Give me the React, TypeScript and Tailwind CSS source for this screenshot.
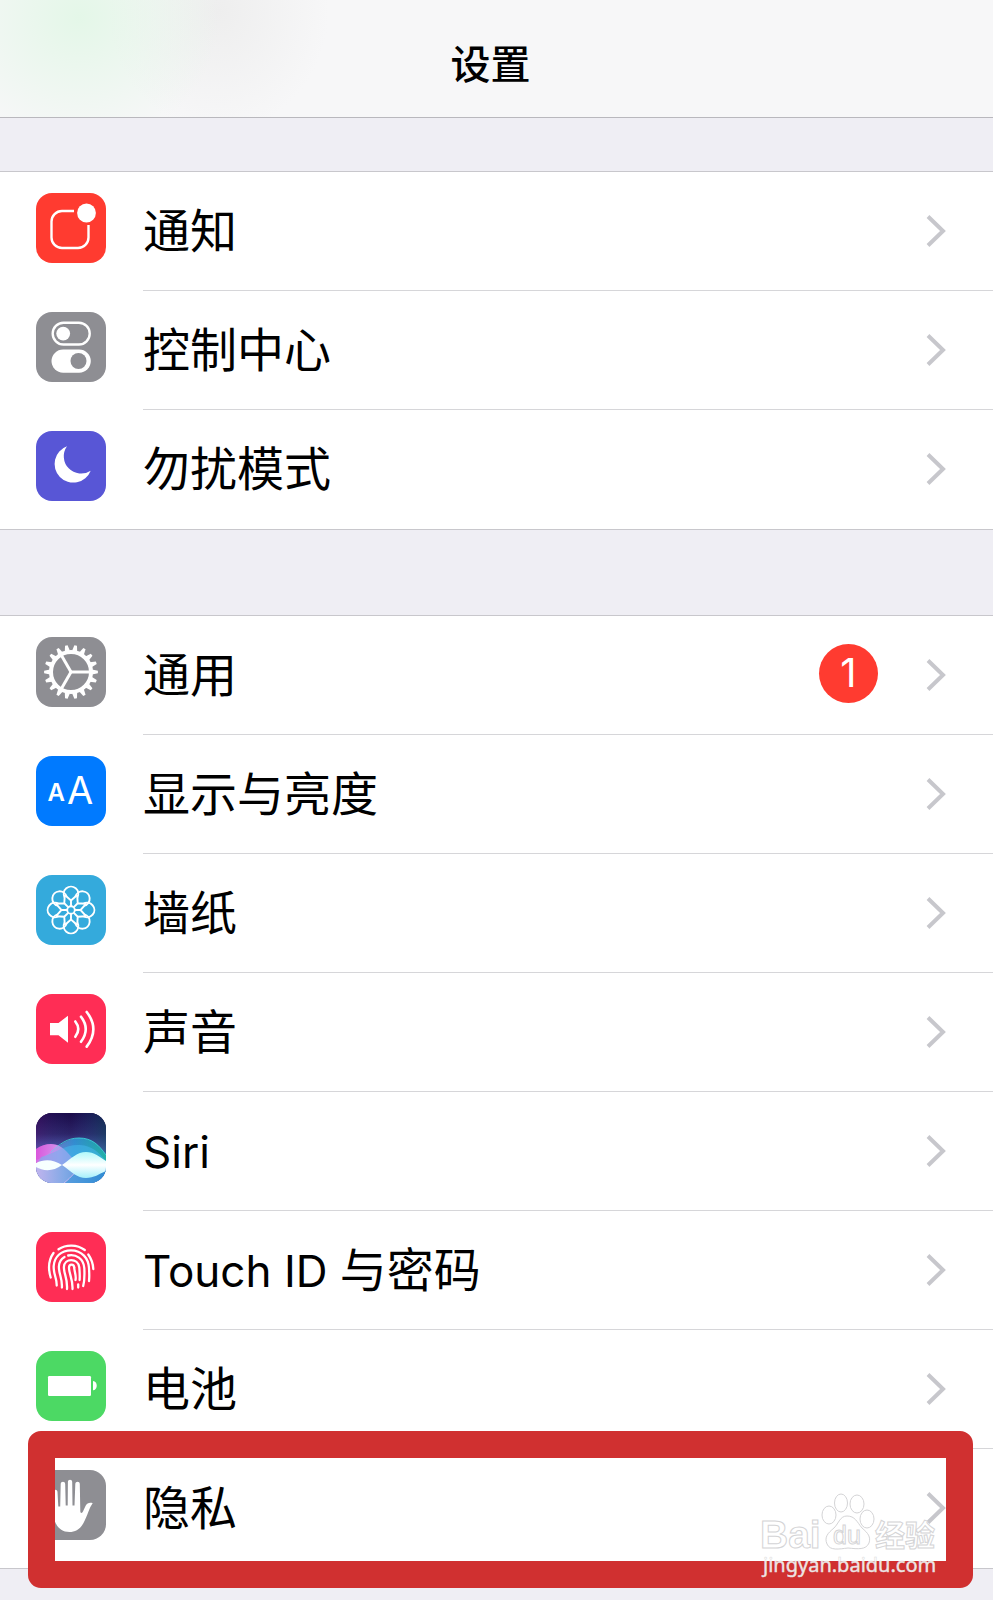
import React from 'react';

interface SettingItem {
  label: React.ReactNode;
  icon: React.ReactNode;
  tile: string;
  badge?: number;
  highlighted?: boolean;
}

const GEAR_TEETH = Array.from({ length: 18 }, (_, i) => i * 20);
const PETALS = Array.from({ length: 8 }, (_, i) => i * 45);

function Glyph({ children }: { children: React.ReactNode }) {
  return (
    <svg viewBox="0 0 70 70" className="block size-full" fill="none" aria-hidden="true">
      {children}
    </svg>
  );
}

function NotificationGlyph() {
  return (
    <Glyph>
      <path d="M38 18H26a10.5 10.5 0 0 0-10.5 10.5v16A10.5 10.5 0 0 0 26 55h16a10.5 10.5 0 0 0 10.5-10.5V32" stroke="#fff" strokeWidth="2.4" />
      <circle cx="50.5" cy="20" r="9.4" fill="#fff" />
    </Glyph>
  );
}

function ControlCenterGlyph() {
  return (
    <Glyph>
      <rect x="16.7" y="10.8" width="37" height="21.7" rx="10.8" stroke="#fff" strokeWidth="2.4" />
      <circle cx="27.2" cy="21.6" r="6.9" fill="#fff" />
      <rect x="15.5" y="37.5" width="39.3" height="23.2" rx="11.6" fill="#fff" />
      <circle cx="42.5" cy="49" r="8" fill="#8e8e93" />
    </Glyph>
  );
}

function MoonGlyph() {
  return (
    <Glyph>
      <path d="M31 15.3A18.7 18.7 0 1 0 54.7 39.7A17.3 17.3 0 0 1 31 15.3Z" fill="#fff" />
    </Glyph>
  );
}

function GearGlyph() {
  return (
    <Glyph>
      <g transform="translate(35 35)">
        <circle r="20" stroke="#fff" strokeWidth="4" />
        {GEAR_TEETH.map((angle) => (
          <path key={angle} d="M21-2.6L26.9-1.3V1.3L21 2.6Z" fill="#fff" transform={`rotate(${angle})`} />
        ))}
        {[0, 120, 240].map((angle) => (
          <path key={angle} d="M0 0H19" stroke="#fff" strokeWidth="3" transform={`rotate(${angle})`} />
        ))}
      </g>
    </Glyph>
  );
}

function TextSizeGlyph() {
  return (
    <Glyph>
      <text x="11.5" y="45" fill="#fff" fontSize="24" fontWeight="600" fontFamily="Inter, sans-serif">A</text>
      <text x="31" y="48" fill="#fff" fontSize="38" fontFamily="Inter, sans-serif">A</text>
    </Glyph>
  );
}

function FlowerGlyph() {
  return (
    <Glyph>
      <g transform="translate(35 35)" stroke="#fff" strokeWidth="1.9">
        <circle r="3.8" />
        {PETALS.map((angle) => (
          <g key={angle} transform={`rotate(${angle})`}>
            <path d="M-6.3-12.4A7.3 7.3 0 1 1 6.3-12.4" />
            <path d="M0-4V-9.5M-6.2-15L0-9.5L6.2-15" />
          </g>
        ))}
      </g>
    </Glyph>
  );
}

function SpeakerGlyph() {
  return (
    <Glyph>
      <path d="M14 29H22.5L32 21.7V48.8L22.5 41.3H14Z" fill="#fff" />
      <g stroke="#fff" strokeWidth="2.6" strokeLinecap="round">
        <path d="M39.3 27.5Q45.3 35 39.3 42.8" />
        <path d="M45 22.7Q54.5 35 45 47.8" />
        <path d="M50.7 18Q64 35 50.7 52.6" />
      </g>
    </Glyph>
  );
}

function SiriGlyph() {
  return (
    <Glyph>
      <defs>
        <linearGradient id="siri-sky" x1="0" y1="0" x2="0" y2="1">
          <stop offset="0" stopColor="#1a0a48" />
          <stop offset="0.3" stopColor="#2c2468" />
          <stop offset="0.6" stopColor="#5a6bc4" />
          <stop offset="1" stopColor="#6fa5e6" />
        </linearGradient>
        <linearGradient id="siri-side" x1="0" y1="0" x2="1" y2="0">
          <stop offset="0" stopColor="#8a1090" stopOpacity="0.2" />
          <stop offset="0.5" stopColor="#3060b0" stopOpacity="0" />
          <stop offset="1" stopColor="#055c60" stopOpacity="0.4" />
        </linearGradient>
        <linearGradient id="siri-pink" x1="0" y1="0" x2="1" y2="0">
          <stop offset="0" stopColor="#e02bd0" />
          <stop offset="0.5" stopColor="#d893f0" />
          <stop offset="1" stopColor="#8fb0f5" stopOpacity="0.3" />
        </linearGradient>
        <linearGradient id="siri-teal" x1="0" y1="0" x2="1" y2="0">
          <stop offset="0" stopColor="#b9a9f5" stopOpacity="0.3" />
          <stop offset="0.55" stopColor="#2f9fe0" />
          <stop offset="1" stopColor="#1cc2a8" />
        </linearGradient>
        <linearGradient id="siri-base" x1="0" y1="0" x2="1" y2="0">
          <stop offset="0" stopColor="#c0b4ee" />
          <stop offset="0.4" stopColor="#83a9e6" />
          <stop offset="1" stopColor="#2e86d0" />
        </linearGradient>
        <linearGradient id="siri-wave" x1="0" y1="0" x2="0" y2="1">
          <stop offset="0" stopColor="#b0f9fa" />
          <stop offset="0.5" stopColor="#ffffff" />
          <stop offset="1" stopColor="#a4f0fb" />
        </linearGradient>
      </defs>
      <rect width="70" height="70" fill="url(#siri-sky)" />
      <rect width="70" height="52" fill="url(#siri-side)" />
      <path d="M0 36C8 31 17 29 25 34C33 39 38 49 46 53H0Z" fill="url(#siri-pink)" opacity="0.9" />
      <path d="M0 47C15 43 26 25 43 25C56 25 63 32 70 42V55H0Z" fill="url(#siri-teal)" opacity="0.8" />
      <path d="M15 39C24 31 31 25 43 25C56 25 63 32 70 42" stroke="#3edbe0" strokeWidth="0.8" />
      <path d="M5 44C20 40 30 31 44 32C57 33 62 39 70 48V54H0Z" fill="#43b4e8" opacity="0.6" />
      <path d="M0 36C8 31 17 29 25 34C33 39 38 49 46 53H12L0 49Z" fill="#e9a0f5" opacity="0.35" />
      <path d="M0 52H70V70H0Z" fill="url(#siri-base)" />
      <path d="M28 70C36 64 40 56 48 53H70V70Z" fill="#2f91d8" opacity="0.5" />
      <path d="M28 70C36 64 40 57 46 54" stroke="#dcbcf5" strokeWidth="0.8" />
      <path d="M0 50C8 46 17 46 26 52C17 59 7 58 0 54Z" fill="#f7ffff" />
      <path d="M26 52C36 45 41 39 50 39C58 39 64 44 70 48V58C63 61 58 65 50 65C41 65 36 59 26 52Z" fill="url(#siri-wave)" />
    </Glyph>
  );
}

function FingerprintGlyph() {
  return (
    <Glyph>
      <g stroke="#fff" strokeWidth="2.3" strokeLinecap="round">
        <path d="M22.5 17.3C30 12.3 41 12.3 48.8 18" />
        <path d="M17.5 21C12.5 28 11.8 36 14.7 45.5" />
        <path d="M52.3 22.5C55.5 27 57 31 57.3 37" />
        <path d="M20.7 53.5C21 46 17.2 42 17.7 34C18.3 25 25 18.3 35 18.3C46 18.3 52.5 26.5 53 36C53.2 41 53.6 44 53 49" />
        <path d="M25.9 55.5C26.5 46 22.6 42 22.9 34.5C23.1 30 25.3 26.8 28.5 25" />
        <path d="M32.2 23.5C40 22 47.6 26.5 48.3 36C48.6 42 48.8 48 47.2 54" />
        <path d="M31 57C31.7 46 27.7 42 27.9 35C28.3 26 42 25.5 43.3 35.5C43.6 40 44 43 43.6 48" />
        <path d="M36.5 57C37 47 32.7 41 33 35.5C33.2 31.5 38 31.7 38.2 35.5" />
        <path d="M38.2 35.5C38.5 40 40.5 44 39.5 48" />
        <path d="M42.2 52.5V55.5" />
      </g>
    </Glyph>
  );
}

function BatteryGlyph() {
  return (
    <Glyph>
      <rect x="12" y="25" width="43" height="20" rx="1.2" fill="#fff" />
      <path d="M57 30C62 30 62 39.3 57 39.3Z" fill="#fff" />
    </Glyph>
  );
}

function HandGlyph() {
  return (
    <Glyph>
      <path
        d="M17 22C17 19 21.5 19 21.5 22L22.3 36.5H24.2L24.7 14C24.7 11 29.2 11 29.2 14L29.7 35.5H31.7L31.9 12C31.9 9 36.2 9 36.2 12L36.5 35.5H38.5L39.3 14C39.4 11 43.9 11 43.8 14L44.3 41C44.3 43.5 46.2 43.5 47.2 41L49.5 36C51 33 54 32.3 56.7 33.3C53 38 51.5 46 47.5 53C44 59.5 39 62 33.5 62C23 62 18 53 17.5 45Z"
        fill="#fff"
      />
    </Glyph>
  );
}

// Latin words are set a little smaller than the Chinese beside them
function Latin({ children }: { children: React.ReactNode }) {
  return <span className="text-[44px]">{children}</span>;
}

const GROUPS: SettingItem[][] = [
  [
    { label: '通知', icon: <NotificationGlyph />, tile: 'bg-[#ff3b30]' },
    { label: '控制中心', icon: <ControlCenterGlyph />, tile: 'bg-[#8e8e93]' },
    { label: '勿扰模式', icon: <MoonGlyph />, tile: 'bg-[#5856d6]' },
  ],
  [
    { label: '通用', icon: <GearGlyph />, tile: 'bg-[#8e8e93]', badge: 1 },
    { label: '显示与亮度', icon: <TextSizeGlyph />, tile: 'bg-[#007aff]' },
    { label: '墙纸', icon: <FlowerGlyph />, tile: 'bg-[#34aadc]' },
    { label: '声音', icon: <SpeakerGlyph />, tile: 'bg-[#ff2d55]' },
    { label: <Latin>Siri</Latin>, icon: <SiriGlyph />, tile: 'bg-[#1d0b4b]' },
    { label: <><Latin>Touch ID </Latin>与密码</>, icon: <FingerprintGlyph />, tile: 'bg-[#ff2d55]' },
    { label: '电池', icon: <BatteryGlyph />, tile: 'bg-[#4cd964]' },
    { label: '隐私', icon: <HandGlyph />, tile: 'bg-[#8e8e93]', highlighted: true },
  ],
];

function Watermark() {
  return (
    <svg viewBox="0 0 190 90" className="pointer-events-none absolute right-11 -bottom-[14px] w-[190px]" fill="#fff" fillOpacity="0.8" stroke="#d4d4d6" strokeWidth="1">
      <text x="1" y="56" fontSize="39" fontWeight="700" fontFamily="'Liberation Sans', sans-serif">Bai</text>
      <ellipse cx="70" cy="23" rx="7" ry="9" />
      <ellipse cx="82" cy="11" rx="6.5" ry="9" />
      <ellipse cx="98" cy="12" rx="7" ry="9" />
      <ellipse cx="108" cy="27" rx="7" ry="9" />
      <path d="M88 24C96 24 98 30 103 36C109 41 112 45 110 51C107 58 99 57 89 56C80 57 71 59 68 52C65 45 69 41 75 36C80 31 81 24 88 24Z" />
      <text x="74" y="52" fontSize="25" fontFamily="'Liberation Sans', sans-serif">du</text>
      <text x="116" y="54" fontSize="30" fontWeight="700" fontFamily="'Noto Sans CJK SC', sans-serif">经验</text>
      <text x="4" y="80" fontSize="20" fillOpacity="0.9" stroke="#dcdcdc" strokeWidth="0.5" fontFamily="'Noto Sans', sans-serif">jingyan.baidu.com</text>
    </svg>
  );
}

function SettingRow({ item, last }: { item: SettingItem; last: boolean }) {
  return (
    <li className="relative">
      <a href="#" className="flex h-[119px] items-stretch pl-9 text-black">
        <span className={`mt-[21px] mr-[37px] size-[70px] shrink-0 overflow-hidden rounded-2xl ${item.tile}`}>{item.icon}</span>
        <span className={`flex flex-1 items-center border-b pr-[47px] ${last ? 'border-transparent' : 'border-[#d6d6d9]'}`}>
          <span className="flex-1 pb-0.5 text-[47px] leading-none">{item.label}</span>
          {item.badge && (
            <span className="mr-12 mb-1 flex size-[59px] items-center justify-center rounded-full bg-[#ff3b30] text-[40px] leading-none text-white">
              {item.badge}
            </span>
          )}
          <svg viewBox="0 0 20 32" className="h-8 w-5" fill="none" aria-hidden="true">
            <path d="M2 1.5L17 16L2 30.5" stroke="#c7c7cc" strokeWidth="4" />
          </svg>
        </span>
      </a>
      {item.highlighted && (
        <>
          <div className="pointer-events-none absolute -top-[18px] right-5 -bottom-5 left-7 rounded-[13px] border-[27px] border-[#d03030]" />
          <Watermark />
        </>
      )}
    </li>
  );
}

export default function App() {
  return (
    <div className="min-h-screen bg-[#efeef4] font-[Inter,'Noto_Sans_CJK_SC',sans-serif]">
      <header className="flex h-[118px] items-center justify-center border-b border-[#b9b8bd] bg-[#f7f7f8] bg-[radial-gradient(ellipse_140px_130px_at_8%_15%,#e4f7e8,transparent),radial-gradient(ellipse_110px_120px_at_22%_10%,#eeeeee,transparent)] pt-3 pr-3">
        <h1 className="text-[40px] leading-none font-medium text-black">设置</h1>
      </header>
      <main className="flex flex-col gap-[85px] pt-[53px] pb-8">
        {GROUPS.map((items, index) => (
          <ul key={index} className="border-y border-[#c8c7cc] bg-white">
            {items.map((item, i) => (
              <SettingRow key={i} item={item} last={i === items.length - 1} />
            ))}
          </ul>
        ))}
      </main>
    </div>
  );
}
